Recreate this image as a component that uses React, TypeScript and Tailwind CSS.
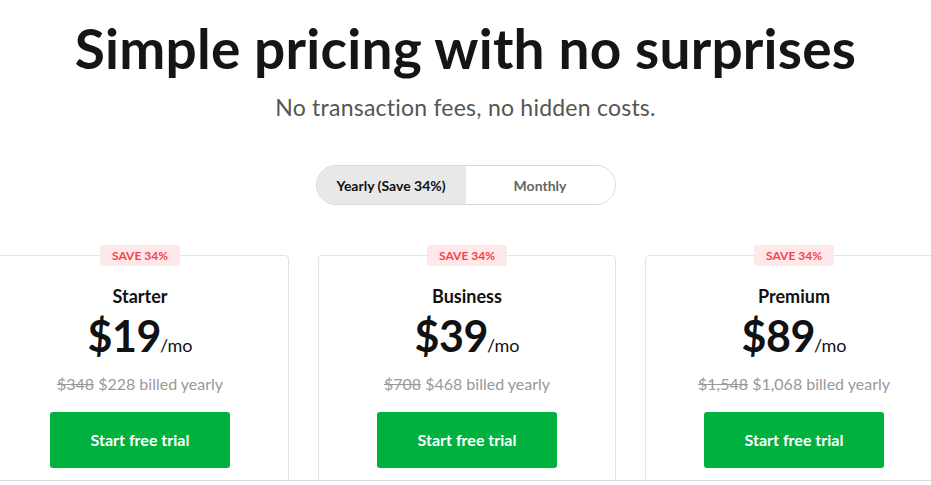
import React, { useState } from "react";

interface Plan {
  name: string;
  price: string;
  was: string;
  now: string;
}

const plans: Plan[] = [
  { name: "Starter", price: "$19", was: "$348", now: "$228" },
  { name: "Business", price: "$39", was: "$708", now: "$468" },
  { name: "Premium", price: "$89", was: "$1,548", now: "$1,068" },
];

function PlanCard({ plan }: { plan: Plan }) {
  return (
    <div className="relative w-[298px] shrink-0 h-[260px] border border-[#e4e4e4] rounded-[4px] bg-white flex flex-col items-center">
      <span className="absolute -top-[11px] left-1/2 -translate-x-1/2 h-[21px] w-[80px] flex items-center justify-center rounded-[3px] bg-[#ffe8ea] text-[#f4434c] text-[12px] font-bold">
        SAVE 34%
      </span>
      <div className="mt-[29px] text-[18px] font-bold text-[#111] leading-[22px]">
        {plan.name}
      </div>
      <div className="mt-[3px] flex items-baseline text-[#111]">
        <span className="text-[43px] font-bold leading-[52px] tracking-[-0.01em]">
          {plan.price}
        </span>
        <span className="text-[18px] leading-none -ml-[1px]">/mo</span>
      </div>
      <div className="mt-[12px] text-[16px] text-[#999] leading-[20px]">
        <span className="line-through">{plan.was}</span> {plan.now} billed yearly
      </div>
      <button className="mt-[18px] w-[180px] h-[56px] shrink-0 rounded-[3px] bg-[#00b140] text-white text-[16px] font-bold">
        Start free trial
      </button>
    </div>
  );
}

export default function App() {
  const [yearly, setYearly] = useState(true);

  return (
    <div
      className="h-[485px] w-full overflow-hidden bg-white"
      style={{ fontFamily: "Lato, 'Open Sans', sans-serif" }}
    >
      <div className="h-[481px] border-b border-[#dcdcdc] overflow-hidden flex flex-col items-center">
        <h1 className="shrink-0 mt-[14px] text-[55px] font-bold text-[#151515] leading-[68px] tracking-[0.004em]">
          Simple pricing with no surprises
        </h1>
        <p className="shrink-0 mt-[10px] text-[23px] text-[#555] leading-[30px] tracking-[0.01em]">
          No transaction fees, no hidden costs.
        </p>
        <div className="shrink-0 mt-[43px] flex w-[300px] h-[40px] rounded-full border border-[#d8d8d8] overflow-hidden text-[14px] font-bold">
          <button
            onClick={() => setYearly(true)}
            className={`w-[150px] h-full ${yearly ? "bg-[#e8e8e8] text-[#111]" : "bg-white text-[#666]"}`}
          >
            Yearly (Save 34%)
          </button>
          <button
            onClick={() => setYearly(false)}
            className={`w-[150px] h-full ${!yearly ? "bg-[#e8e8e8] text-[#111]" : "bg-white text-[#666]"}`}
          >
            Monthly
          </button>
        </div>
        <div className="shrink-0 mt-[50px] ml-[3px] flex gap-[29px] justify-center">
          {plans.map((p) => (
            <PlanCard key={p.name} plan={p} />
          ))}
        </div>
      </div>
    </div>
  );
}
